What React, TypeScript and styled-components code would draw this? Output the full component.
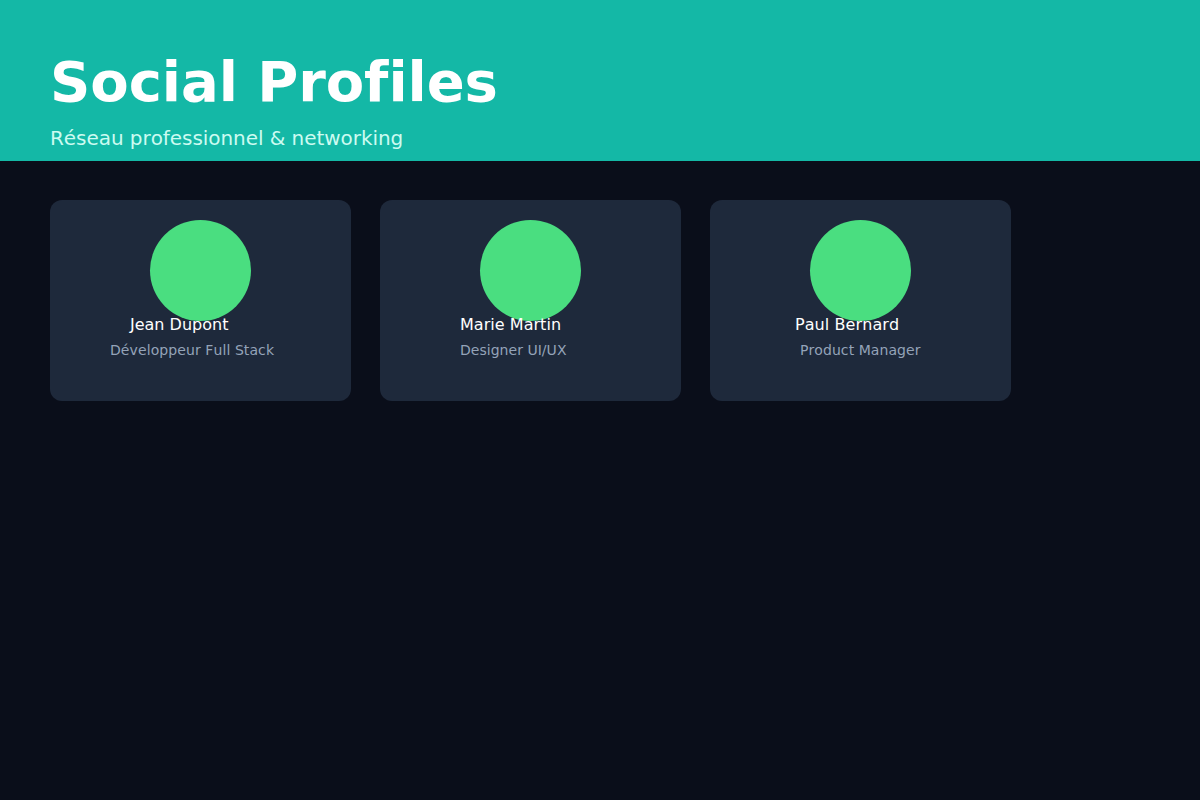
import React from "react";
import styled, { createGlobalStyle } from "styled-components";

const Global = createGlobalStyle`
  html, body { margin: 0; padding: 0; background: #0a0e1a; }
  body {
    font-family: "DejaVu Sans", sans-serif;
    text-rendering: optimizeSpeed;
    font-kerning: none;
    font-variant-ligatures: none;
  }
`;

const Page = styled.div`
  width: 1200px;
  height: 800px;
  background: #0a0e1a;
  overflow: hidden;
`;

const Header = styled.header`
  height: 161px;
  box-sizing: border-box;
  background: #14b8a6;
  padding: 49px 50px 0;
`;

const Title = styled.h1`
  margin: 0;
  font-size: 56px;
  line-height: 65px;
  font-weight: 700;
  letter-spacing: -0.07px;
  color: #ffffff;
`;

const Subtitle = styled.p`
  margin: 13px 0 0;
  font-size: 20px;
  line-height: 23px;
  letter-spacing: -0.055px;
  color: #ccfbf1;
`;

const Cards = styled.main`
  display: flex;
  gap: 29px;
  padding: 39px 50px 0;
`;

const Card = styled.article`
  width: 301px;
  height: 201px;
  box-sizing: border-box;
  background: #1e293b;
  border-radius: 12px;
  padding-top: 20px;
  display: flex;
  flex-direction: column;
`;

const Avatar = styled.div`
  width: 101px;
  height: 101px;
  border-radius: 50%;
  background: #4ade80;
  align-self: center;
  flex: none;
`;

const Name = styled.div<{ $left: number; $spacing: number }>`
  margin: -6px 0 0 ${(p) => p.$left}px;
  font-size: 16px;
  line-height: 19px;
  letter-spacing: ${(p) => p.$spacing}px;
  color: #ffffff;
  white-space: nowrap;
`;

const Role = styled.div<{ $left: number; $spacing: number }>`
  margin: 8px 0 0 ${(p) => p.$left}px;
  font-size: 14px;
  line-height: 17px;
  letter-spacing: ${(p) => p.$spacing}px;
  color: #94a3b8;
  white-space: nowrap;
`;

const people = [
  { name: "Jean Dupont", role: "Développeur Full Stack", nameLeft: 80, roleLeft: 60, nameSpacing: 0, roleSpacing: 0.09 },
  { name: "Marie Martin", role: "Designer UI/UX", nameLeft: 80, roleLeft: 80, nameSpacing: 0.04, roleSpacing: 0.03 },
  { name: "Paul Bernard", role: "Product Manager", nameLeft: 85, roleLeft: 90, nameSpacing: 0.08, roleSpacing: 0.07 },
];

export default function App() {
  return (
    <Page>
      <Global />
      <Header>
        <Title>Social Profiles</Title>
        <Subtitle>Réseau professionnel &amp; networking</Subtitle>
      </Header>
      <Cards>
        {people.map((p) => (
          <Card key={p.name}>
            <Avatar />
            <Name $left={p.nameLeft} $spacing={p.nameSpacing}>{p.name}</Name>
            <Role $left={p.roleLeft} $spacing={p.roleSpacing}>{p.role}</Role>
          </Card>
        ))}
      </Cards>
    </Page>
  );
}
